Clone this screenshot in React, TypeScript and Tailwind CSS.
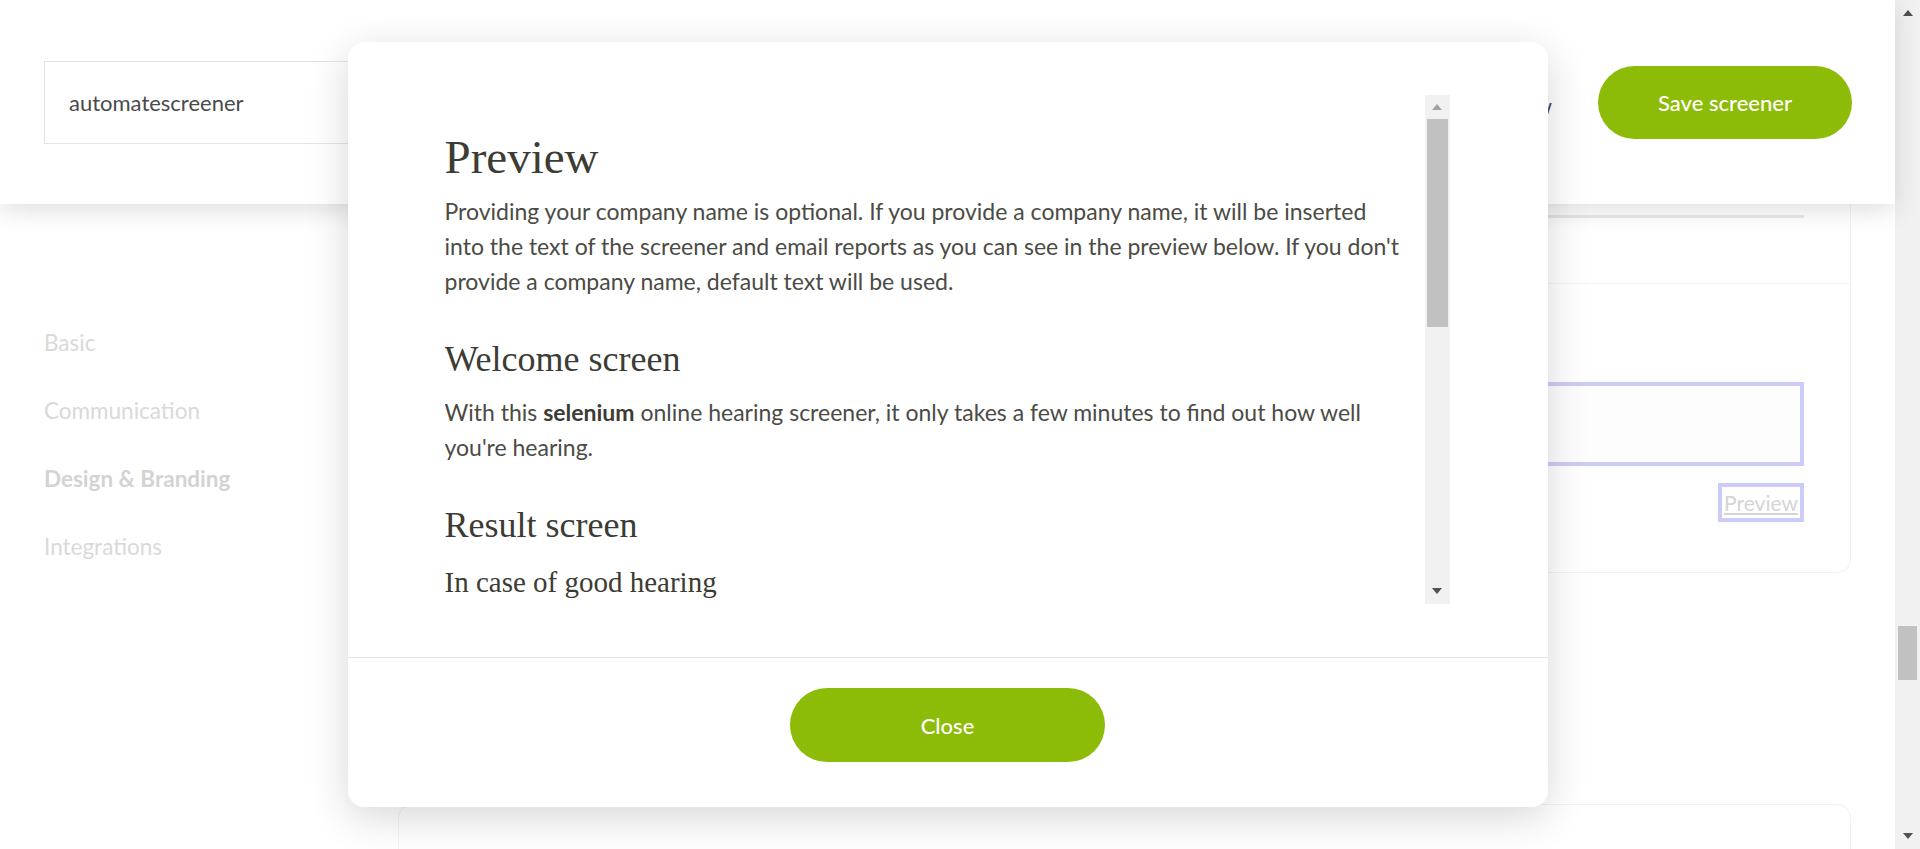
import React from "react";

const sans = { fontFamily: "Lato, 'Noto Sans', sans-serif" };
const serif = { fontFamily: "'Liberation Serif', 'DejaVu Serif', serif" };

function TriUp({ color }: { color: string }) {
  return (
    <svg width="10" height="6" viewBox="0 0 10 6">
      <polygon points="5,0 10,6 0,6" fill={color} />
    </svg>
  );
}
function TriDown({ color }: { color: string }) {
  return (
    <svg width="10" height="6" viewBox="0 0 10 6">
      <polygon points="0,0 10,0 5,6" fill={color} />
    </svg>
  );
}

export default function App() {
  return (
    <div className="relative w-[1920px] h-[849px] overflow-hidden bg-white flex" style={sans}>
      {/* page */}
      <div className="w-[1895px] h-full flex flex-col">
        {/* header */}
        <div className="relative z-10 h-[204px] shrink-0 bg-white shadow-[0_6px_24px_rgba(0,0,0,0.13)] flex items-center pl-[44px] pr-[43px]">
          <div className="w-[560px] h-[83px] border border-[#e3e3e3] flex items-center pl-[24px] text-[22px] text-[#4a4a4a]">
            automatescreener
          </div>
          <div className="flex-1" />
          <span className="text-[22px] text-[#4a4a4a] pt-[6px]">Preview</span>
          <button className="ml-[46px] w-[254px] h-[73px] rounded-full bg-[#8cbc07] text-white text-[22px] font-medium">
            Save screener
          </button>
        </div>

        {/* body */}
        <div className="flex pl-[44px]">
          <nav className="w-[354px] pt-[124px] flex flex-col gap-[38px] text-[22.5px] leading-[30px] text-[#d9d9d9]">
            <span>Basic</span>
            <span>Communication</span>
            <span className="font-bold text-[#d3d3d3]">Design &amp; Branding</span>
            <span>Integrations</span>
          </nav>
          <div className="w-[1453px] flex flex-col">
            <div className="h-[369px] border-x border-b border-[#f2f2f2] rounded-b-[14px] flex flex-col">
              <div className="h-[80px] border-b border-[#f3f3f3] pt-[11px] px-[46px]">
                <div className="h-[3px] bg-[#e9e9e9]" />
              </div>
              <div className="flex flex-col px-[46px] pt-[98px]">
                <div className="h-[84px] border-4 border-[#cbcbf7] bg-[#fdfdfd]" />
                <div className="self-end mt-[17px] h-[39px] w-[86px] border-4 border-[#cbcbf7] flex items-center justify-center text-[21px] leading-none text-[#d4d4d4] underline">
                  Preview
                </div>
              </div>
            </div>
            <div className="mt-[231px] h-[200px] border border-[#f2f2f2] rounded-[14px]" />
          </div>
        </div>
      </div>

      {/* page scrollbar */}
      <div className="w-[25px] h-full bg-[#f1f1f1] flex flex-col items-center">
        <div className="h-[26px] flex items-center justify-center">
          <TriUp color="#505050" />
        </div>
        <div className="h-[600px]" />
        <div className="w-[19px] h-[54px] bg-[#c1c1c1]" />
        <div className="flex-1" />
        <div className="h-[26px] flex items-center justify-center">
          <TriDown color="#505050" />
        </div>
      </div>

      {/* modal */}
      <div className="absolute inset-0 z-20 flex items-center justify-center pr-[25px]">
        <div className="w-[1200px] h-[765px] bg-white rounded-[16px] shadow-[0_10px_40px_rgba(0,0,0,0.16)] flex flex-col">
          <div className="flex-1 min-h-0 flex pt-[53px] pb-[53px] pl-[97px] pr-[98px]">
            <div className="flex-1 overflow-hidden pt-[37px] pr-[20px] text-[#4b4b45]">
              <h1 className="text-[47px] leading-[1.1] text-[#3c3b34]" style={serif}>
                Preview
              </h1>
              <p className="mt-[10px] text-[23px] leading-[35px]">
                Providing your company name is optional. If you provide a company name, it will be inserted into the text of the screener and email reports as you can see in the preview below. If you don't provide a company name, default text will be used.
              </p>
              <h2 className="mt-[39px] text-[36px] leading-[1.2] text-[#3c3b34]" style={serif}>
                Welcome screen
              </h2>
              <p className="mt-[14px] text-[23px] leading-[35px]">
                With this <b className="font-bold text-[#3c3b34]">selenium</b> online hearing screener, it only takes a few minutes to find out how well you're hearing.
              </p>
              <h2 className="mt-[39px] text-[36px] leading-[1.2] text-[#3c3b34]" style={serif}>
                Result screen
              </h2>
              <h3 className="mt-[18px] text-[29px] leading-[1.2] text-[#3c3b34]" style={serif}>
                In case of good hearing
              </h3>
            </div>
            <div className="w-[25px] bg-[#f1f1f1] flex flex-col items-center">
              <div className="h-[24px] flex items-center justify-center">
                <TriUp color="#a3a3a3" />
              </div>
              <div className="w-[21px] h-[208px] bg-[#c1c1c1]" />
              <div className="flex-1" />
              <div className="h-[26px] flex items-center justify-center">
                <TriDown color="#505050" />
              </div>
            </div>
          </div>
          <div className="border-t border-[#e6e6e6] pt-[30px] pb-[45px] flex justify-center">
            <button className="w-[315px] h-[74px] rounded-full bg-[#8cbc07] text-white text-[22px] font-medium">
              Close
            </button>
          </div>
        </div>
      </div>
    </div>
  );
}
